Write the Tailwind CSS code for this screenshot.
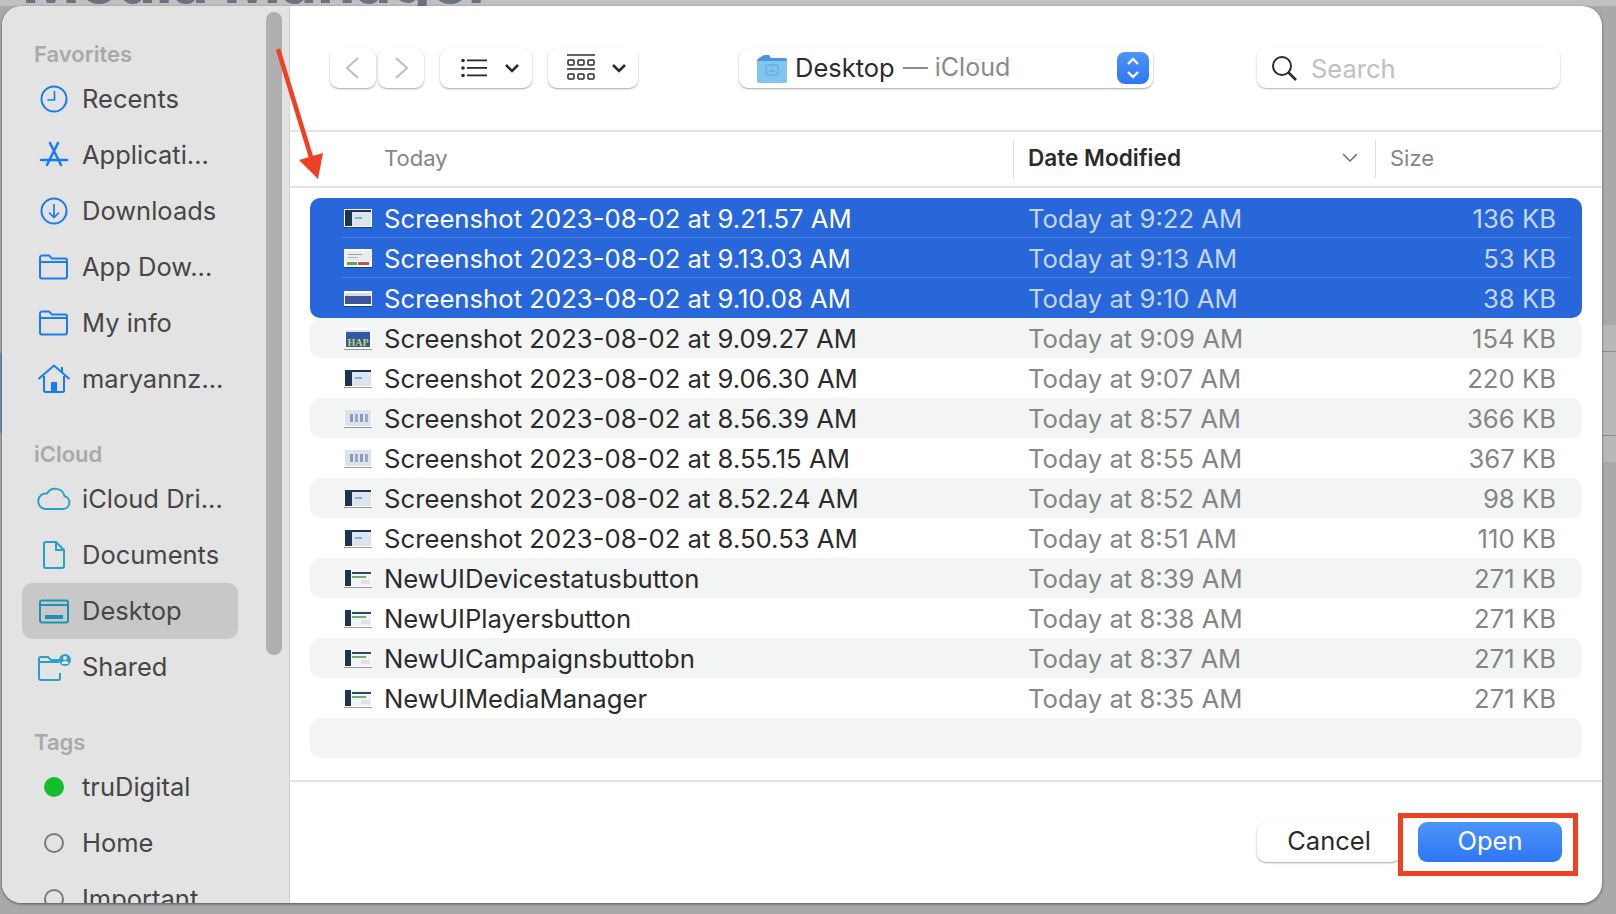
<!DOCTYPE html>
<html>

<head>
    <meta charset="UTF-8">
    <meta name="viewport" content="width=device-width, initial-scale=1.0">
    <script src="https://cdn.jsdelivr.net/npm/@tailwindcss/browser@4"></script>
    <title>Open dialog</title>
</head>

<body class="font-['Inter','Noto_Sans',sans-serif] overflow-hidden">
    <!-- file thumbnails -->
    <svg class="absolute w-0 h-0">
        <symbol id="thumb-dash" viewBox="0 0 30 24">
            <rect x="1" y="4" width="28" height="18" fill="#00000060"/><rect x="1" y="3" width="28" height="18" fill="#fff"/>
            <rect x="2" y="4" width="26" height="16" fill="#dfe4ec"/><rect x="2" y="4" width="26" height="2" fill="#1e3352"/><rect x="2" y="4" width="7" height="16" fill="#1e3352"/><rect x="12" y="11" width="7" height="2" fill="#6fb3e8"/>
        </symbol>
        <symbol id="thumb-form" viewBox="0 0 30 24">
            <rect x="1" y="4" width="28" height="18" fill="#00000060"/><rect x="1" y="3" width="28" height="18" fill="#fff"/>
            <rect x="2" y="5" width="26" height="10" fill="#e9ebee"/><rect x="5" y="8" width="14" height="1" fill="#9aa3b3"/><rect x="5" y="11" width="10" height="1" fill="#b0b6c2"/><rect x="4" y="16" width="10" height="3" fill="#57a55a"/><rect x="15" y="16" width="11" height="3" fill="#c9504a"/>
        </symbol>
        <symbol id="thumb-band" viewBox="0 0 30 24">
            <rect x="1" y="6" width="28" height="15" fill="#00000060"/><rect x="1" y="5" width="28" height="15" fill="#fff"/>
            <rect x="2" y="7" width="26" height="3" fill="#d9dce6"/><rect x="2" y="10" width="26" height="8" fill="#3f549f"/>
        </symbol>
        <symbol id="thumb-grid" viewBox="0 0 30 24">
            <rect x="1" y="4" width="28" height="18" fill="#00000060"/><rect x="1" y="3" width="28" height="18" fill="#fff"/>
            <rect x="2" y="4" width="26" height="16" fill="#dde2ec"/><rect x="7" y="8" width="3" height="8" fill="#8c9ac0"/><rect x="12" y="8" width="3" height="8" fill="#9aa7ca"/><rect x="17" y="8" width="3" height="8" fill="#8c9ac0"/><rect x="22" y="8" width="3" height="8" fill="#9aa7ca"/>
        </symbol>
        <symbol id="thumb-ui" viewBox="0 0 30 24">
            <rect x="1" y="4" width="28" height="18" fill="#00000060"/><rect x="1" y="3" width="28" height="18" fill="#fff"/>
            <rect x="2" y="4" width="26" height="16" fill="#f2f4f6"/><rect x="2" y="4" width="6" height="16" fill="#1e3352"/><rect x="9" y="6" width="19" height="2" fill="#2f4668"/><rect x="9" y="10" width="14" height="2" fill="#6bb06c"/><rect x="18" y="14" width="9" height="4" fill="#dfe2e6"/>
        </symbol>
    </svg>

    <div class="relative w-[1616px] h-[914px] overflow-hidden bg-[#a9a9a9] pl-[2px] pt-[6px]">
        <!-- what is behind the dialog -->
        <div class="absolute left-0 top-0 w-full h-[6px] bg-[#c0c0c0]"></div>
        <div class="absolute left-[22px] top-0 h-[7px] overflow-hidden blur-[0.5px]">
            <div class="-mt-[22px] text-[62px] leading-[6px] font-bold text-[#6b7280] whitespace-nowrap">Media Manager</div>
        </div>
        <div class="absolute left-0 top-[353px] w-[3px] h-[80px] bg-[#6f93b5]"></div>
        <div class="absolute left-[1602px] top-[325px] w-[14px] h-[137px] bg-[#b8b8b8] border-y-0">
            <div class="mt-[26px] h-[85px] border-y border-[#8d8d8d]"></div>
        </div>

        <!-- dialog -->
        <div class="relative flex w-[1600px] h-[897px] rounded-[20px] overflow-hidden bg-white shadow-[0_1px_3px_rgba(0,0,0,0.5)]">

            <!-- sidebar -->
            <aside class="relative w-[288px] shrink-0 h-full overflow-hidden bg-[#e3e3e3] border-r border-[#d0d0d0]">
                <div class="absolute left-[264px] top-[6px] w-[16px] h-[643px] rounded-full bg-[#afafaf]"></div>

                <div class="pl-[32px] pt-[38px] h-[20px] box-content text-[22px] leading-[20px] font-semibold text-[#a9a9a9]">Favorites</div>
                <div class="mt-[7px] ml-[20px] w-[216px] flex flex-col">
                    <div class="flex items-center h-[56px] pl-[14px] gap-[10px] text-[#464646] text-[25.5px]">
                        <svg class="w-[36px] h-[36px] shrink-0" viewBox="0 0 36 36" fill="none" stroke="#1a7cf5" stroke-width="2"><circle cx="18" cy="18" r="12.5"/><path d="M18.500 10v9h-7" stroke-width="1.7"/></svg>
                        Recents
                    </div>
                    <div class="flex items-center h-[56px] pl-[14px] gap-[10px] text-[#464646] text-[25.5px]">
                        <svg class="w-[36px] h-[36px] shrink-0" viewBox="0 0 36 36" fill="none" stroke="#1a7cf5" stroke-width="2.6" stroke-linecap="round"><path d="M14 6l11 22M22 6L11 28"/><path d="M5 23h26"/></svg>
                        Applicati...
                    </div>
                    <div class="flex items-center h-[56px] pl-[14px] gap-[10px] text-[#464646] text-[25.5px]">
                        <svg class="w-[36px] h-[36px] shrink-0" viewBox="0 0 36 36" fill="none" stroke="#1a7cf5" stroke-width="2"><circle cx="18" cy="18" r="12.5"/><path d="M18 11v13M13 19.500l5 5 5-5" stroke-width="1.7"/></svg>
                        Downloads
                    </div>
                    <div class="flex items-center h-[56px] pl-[14px] gap-[10px] text-[#464646] text-[25.5px]">
                        <svg class="w-[36px] h-[36px] shrink-0" viewBox="0 0 36 36" fill="none" stroke="#1a7cf5" stroke-width="2"><path d="M4 8.500a2 2 0 0 1 2-2h7l3 3h13a2 2 0 0 1 2 2v16a2 2 0 0 1-2 2H6a2 2 0 0 1-2-2zM4 13h27"/></svg>
                        App Dow...
                    </div>
                    <div class="flex items-center h-[56px] pl-[14px] gap-[10px] text-[#464646] text-[25.5px]">
                        <svg class="w-[36px] h-[36px] shrink-0" viewBox="0 0 36 36" fill="none" stroke="#1a7cf5" stroke-width="2"><path d="M4 8.500a2 2 0 0 1 2-2h7l3 3h13a2 2 0 0 1 2 2v16a2 2 0 0 1-2 2H6a2 2 0 0 1-2-2zM4 13h27"/></svg>
                        My info
                    </div>
                    <div class="flex items-center h-[56px] pl-[14px] gap-[10px] text-[#464646] text-[25.5px]">
                        <svg class="w-[36px] h-[36px] shrink-0" viewBox="0 0 36 36" fill="none" stroke="#1a7cf5" stroke-width="2"><path d="M2.500 18L18 4.500 33.500 18M8 15v14.500A1.500 1.500 0 0 0 9.500 31h17a1.500 1.500 0 0 0 1.500-1.500V15M26 6v5"/><rect x="15" y="21" width="6" height="10" fill="#1a7cf5" stroke="none"/></svg>
                        maryannz...
                    </div>
                </div>

                <div class="pl-[32px] mt-[37px] h-[20px] text-[22px] leading-[20px] font-semibold text-[#a9a9a9]">iCloud</div>
                <div class="mt-[7px] ml-[20px] w-[216px] flex flex-col">
                    <div class="flex items-center h-[56px] pl-[14px] gap-[10px] text-[#464646] text-[25.5px]">
                        <svg class="w-[36px] h-[36px] shrink-0" viewBox="0 0 36 36" fill="none" stroke="#27a2c4" stroke-width="2"><path d="M9 28h18a6.500 6.500 0 0 0 1.500-12.800A9.500 9.500 0 0 0 11 12.500 7.800 7.800 0 0 0 9 28z"/></svg>
                        iCloud Dri...
                    </div>
                    <div class="flex items-center h-[56px] pl-[14px] gap-[10px] text-[#464646] text-[25.5px]">
                        <svg class="w-[36px] h-[36px] shrink-0" viewBox="0 0 36 36" fill="none" stroke="#27a2c4" stroke-width="2"><path d="M8 7a2 2 0 0 1 2-2h10l8 8v16a2 2 0 0 1-2 2H10a2 2 0 0 1-2-2zM20 5v8h8"/></svg>
                        Documents
                    </div>
                    <div class="flex items-center h-[56px] pl-[14px] gap-[10px] text-[#464646] text-[25.5px] bg-[#c8c8c8] rounded-[10px]">
                        <svg class="w-[36px] h-[36px] shrink-0" viewBox="0 0 36 36" fill="none" stroke="#1d93b4" stroke-width="2"><rect x="4" y="7.500" width="28" height="22" rx="2"/><path d="M5 12h26"/><rect x="9" y="22" width="18" height="4" fill="#1d93b4" stroke="none"/></svg>
                        Desktop
                    </div>
                    <div class="flex items-center h-[56px] pl-[14px] gap-[10px] text-[#464646] text-[25.5px]">
                        <svg class="w-[36px] h-[36px] shrink-0" viewBox="0 0 36 36" fill="none" stroke="#27a2c4" stroke-width="2"><path d="M23 13H3v16a2 2 0 0 0 2 2h17a2 2 0 0 0 2-2v-5M3 13v-3a2 2 0 0 1 2-2h7l3 3h9"/><circle cx="29" cy="11" r="6" fill="#27a2c4" stroke="none"/><circle cx="29" cy="9" r="2" fill="#e3e3e3" stroke="none"/><path d="M25.500 15a3.500 3 0 0 1 7 0z" fill="#e3e3e3" stroke="none"/></svg>
                        Shared
                    </div>
                </div>

                <div class="pl-[32px] mt-[37px] h-[20px] text-[22px] leading-[20px] font-semibold text-[#a9a9a9]">Tags</div>
                <div class="mt-[7px] ml-[20px] w-[216px] flex flex-col">
                    <div class="flex items-center h-[56px] pl-[14px] gap-[10px] text-[#464646] text-[25.5px]">
                        <svg class="w-[36px] h-[36px] shrink-0" viewBox="0 0 36 36"><circle cx="18" cy="18" r="10" fill="#14bd2d"/></svg>
                        truDigital
                    </div>
                    <div class="flex items-center h-[56px] pl-[14px] gap-[10px] text-[#464646] text-[25.5px]">
                        <svg class="w-[36px] h-[36px] shrink-0" viewBox="0 0 36 36" fill="none" stroke="#7a7a7a" stroke-width="2"><circle cx="18" cy="18" r="9"/></svg>
                        Home
                    </div>
                    <div class="flex items-center h-[56px] pl-[14px] gap-[10px] text-[#464646] text-[25.5px]">
                        <svg class="w-[36px] h-[36px] shrink-0" viewBox="0 0 36 36" fill="none" stroke="#7a7a7a" stroke-width="2"><circle cx="18" cy="18" r="9"/></svg>
                        Important
                    </div>
                </div>
            </aside>

            <!-- main pane -->
            <main class="flex-1 min-w-0 flex flex-col">
                <!-- toolbar -->
                <div class="flex items-center h-[126px] shrink-0 pl-[40px] border-b-2 border-[#e4e4e4]">
                    <button class="flex items-center justify-center w-[46px] h-[40px] rounded-[9px] bg-white shadow-[0_1px_2px_rgba(0,0,0,0.35)]">
                        <svg class="w-[20px] h-[24px]" viewBox="0 0 20 24" fill="none" stroke="#bdbdbd" stroke-width="2"><path d="M15 2L4 12l11 10"/></svg>
                    </button>
                    <button class="ml-[2px] flex items-center justify-center w-[46px] h-[40px] rounded-[9px] bg-white shadow-[0_1px_2px_rgba(0,0,0,0.35)]">
                        <svg class="w-[20px] h-[24px]" viewBox="0 0 20 24" fill="none" stroke="#bdbdbd" stroke-width="2"><path d="M5 2l11 10L5 22"/></svg>
                    </button>
                    <button class="ml-[16px] flex items-center gap-[18px] pl-[21px] w-[92px] h-[40px] rounded-[9px] bg-white shadow-[0_1px_2px_rgba(0,0,0,0.35)]">
                        <svg class="w-[26px] h-[20px]" viewBox="0 0 26 20" fill="#2b2b2b"><circle cx="2" cy="2.500" r="1.800"/><circle cx="2" cy="10" r="1.800"/><circle cx="2" cy="17.500" r="1.800"/><rect x="6" y="1.500" width="20" height="1.800"/><rect x="6" y="9" width="20" height="1.800"/><rect x="6" y="16.500" width="20" height="1.800"/></svg>
                        <svg class="w-[14px] h-[10px]" viewBox="0 0 14 10" fill="none" stroke="#2b2b2b" stroke-width="2.600"><path d="M1 2l6 6 6-6"/></svg>
                    </button>
                    <button class="ml-[16px] flex items-center gap-[17px] pl-[19px] w-[90px] h-[40px] rounded-[9px] bg-white shadow-[0_1px_2px_rgba(0,0,0,0.35)]">
                        <svg class="w-[28px] h-[28px]" viewBox="0 0 28 28" fill="none" stroke="#2b2b2b" stroke-width="1.500"><path d="M0 1h28M0 15h28"/><rect x="1" y="6" width="6" height="5" rx="1"/><rect x="11" y="6" width="6" height="5" rx="1"/><rect x="21" y="6" width="6" height="5" rx="1"/><rect x="1" y="20" width="6" height="5" rx="1"/><rect x="11" y="20" width="6" height="5" rx="1"/><rect x="21" y="20" width="6" height="5" rx="1"/></svg>
                        <svg class="w-[14px] h-[10px]" viewBox="0 0 14 10" fill="none" stroke="#2b2b2b" stroke-width="2.600"><path d="M1 2l6 6 6-6"/></svg>
                    </button>
                    <div class="ml-[101px] relative flex items-center w-[414px] h-[40px] pl-[17px] rounded-[9px] bg-white shadow-[0_1px_2px_rgba(0,0,0,0.35)] text-[25.500px]">
                        <svg class="w-[32px] h-[30px] mr-[7px]" viewBox="0 0 32 30"><path d="M3 5l5-3h5l2 3h14a2 2 0 0 1 2 2v20a2 2 0 0 1-2 2H3a2 2 0 0 1-2-2V7z" fill="#4c94d8"/><path d="M1 8h30v20a2 2 0 0 1-2 2H3a2 2 0 0 1-2-2z" fill="#81c3f1"/><rect x="10" y="12" width="12" height="10" rx="1" fill="none" stroke="#5fa3d8"/><path d="M13 18h6" stroke="#5fa3d8"/></svg>
                        <span class="text-[#2b2b2b]">Desktop</span><span class="text-[#8a8a8a] ml-[8px] text-[25px]">— iCloud</span>
                        <div class="absolute right-[4px] top-[4px] w-[32px] h-[32px] rounded-[8px] bg-[linear-gradient(180deg,#4b94f8,#2f76f6)] flex items-center justify-center">
                            <svg class="w-[16px] h-[26px]" viewBox="0 0 16 26" fill="none" stroke="white" stroke-width="2.400"><path d="M3 9l5-5 5 5M3 17l5 5 5-5"/></svg>
                        </div>
                    </div>
                    <div class="ml-[104px] flex items-center w-[303px] h-[40px] pl-[13px] rounded-[9px] bg-white shadow-[0_1px_2px_rgba(0,0,0,0.3)] text-[25.500px] text-[#c0c0c0]">
                        <svg class="w-[28px] h-[28px] mr-[13px]" viewBox="0 0 28 28" fill="none" stroke="#2b2b2b" stroke-width="2"><circle cx="12" cy="12" r="9"/><path d="M18.500 18.500L26 26" stroke-width="2.500"/></svg>
                        <span class="pt-[2px]">Search</span>
                    </div>
                </div>

                <!-- column headers -->
                <div class="flex items-center h-[56px] shrink-0 border-b-2 border-[#e4e4e4] text-[22px]">
                    <div class="w-[723px] pl-[94px] pb-[2px] text-[#858585]">Today</div>
                    <div class="relative flex items-center w-[362px] h-[38px] pl-[14px] pb-[2px] border-l border-[#dddddd] font-semibold text-[22.6px] text-[#2b2b2b]">
                        Date Modified
                        <svg class="absolute right-[17px] top-[13px] w-[16px] h-[10px]" viewBox="0 0 16 10" fill="none" stroke="#6e6e6e" stroke-width="1.500"><path d="M1 1l7 7 7-7"/></svg>
                    </div>
                    <div class="flex items-center h-[38px] pl-[14px] pb-[2px] border-l border-[#dddddd] text-[#858585]">Size</div>
                </div>

                <!-- file rows -->
                <div class="pt-[10px] pl-[20px] pr-[20px] flex flex-col text-[25.7px] text-[#2b2b2b]">
                    <div class="h-[40px] rounded-t-[10px] bg-[#2767d9] text-white">
                        <div class="flex items-center h-full ml-[32px] mr-[12px] pr-[14px] border-b border-[#4a80e0]">
                            <svg class="w-[30px] h-[24px] ml-[1px] mr-[11px] shrink-0"><use href="#thumb-dash"/></svg>
                            <div class="w-[644px] pt-[3px] whitespace-nowrap">Screenshot 2023-08-02 at 9.21.57 AM</div>
                            <div class="w-[343px] pt-[3px] whitespace-nowrap text-[#c5d6f5]">Today at 9:22 AM</div>
                            <div class="flex-1 pt-[3px] text-right text-[#c5d6f5] whitespace-nowrap">136 KB</div>
                        </div>
                    </div>
                    <div class="h-[40px] bg-[#2767d9] text-white">
                        <div class="flex items-center h-full ml-[32px] mr-[12px] pr-[14px] border-b border-[#4a80e0]">
                            <svg class="w-[30px] h-[24px] ml-[1px] mr-[11px] shrink-0"><use href="#thumb-form"/></svg>
                            <div class="w-[644px] pt-[3px] whitespace-nowrap">Screenshot 2023-08-02 at 9.13.03 AM</div>
                            <div class="w-[343px] pt-[3px] whitespace-nowrap text-[#c5d6f5]">Today at 9:13 AM</div>
                            <div class="flex-1 pt-[3px] text-right text-[#c5d6f5] whitespace-nowrap">53 KB</div>
                        </div>
                    </div>
                    <div class="h-[40px] rounded-b-[10px] bg-[#2767d9] text-white">
                        <div class="flex items-center h-full ml-[32px] mr-[12px] pr-[14px]">
                            <svg class="w-[30px] h-[24px] ml-[1px] mr-[11px] shrink-0"><use href="#thumb-band"/></svg>
                            <div class="w-[644px] pt-[2px] whitespace-nowrap">Screenshot 2023-08-02 at 9.10.08 AM</div>
                            <div class="w-[343px] pt-[2px] whitespace-nowrap text-[#c5d6f5]">Today at 9:10 AM</div>
                            <div class="flex-1 pt-[2px] text-right text-[#c5d6f5] whitespace-nowrap">38 KB</div>
                        </div>
                    </div>
                    <div class="flex items-center h-[40px] pl-[33px] pr-[26px] rounded-[10px] bg-[#f3f5f5]">
                        <svg class="w-[30px] h-[24px] mr-[11px] shrink-0" viewBox="0 0 30 24">
                            <rect x="1" y="3" width="28" height="21" fill="#00000060"/><rect x="1" y="2" width="28" height="21" fill="#fff"/>
                            <rect x="3" y="4" width="24" height="17" fill="#3457a8"/><rect x="3" y="4" width="24" height="2" fill="#dfe4ec"/>
                            <text x="15" y="20" text-anchor="middle" font-family="Liberation Serif, serif" font-size="10" font-weight="700" fill="#c9d94a">HAP</text>
                        </svg>
                        <div class="w-[644px] pt-[2px] whitespace-nowrap">Screenshot 2023-08-02 at 9.09.27 AM</div>
                        <div class="w-[343px] pt-[2px] whitespace-nowrap text-[#858585]">Today at 9:09 AM</div>
                        <div class="flex-1 pt-[2px] text-right text-[#858585] whitespace-nowrap">154 KB</div>
                    </div>
                    <div class="flex items-center h-[40px] pl-[33px] pr-[26px]">
                        <svg class="w-[30px] h-[24px] mr-[11px] shrink-0"><use href="#thumb-dash"/></svg>
                        <div class="w-[644px] pt-[2px] whitespace-nowrap">Screenshot 2023-08-02 at 9.06.30 AM</div>
                        <div class="w-[343px] pt-[2px] whitespace-nowrap text-[#858585]">Today at 9:07 AM</div>
                        <div class="flex-1 pt-[2px] text-right text-[#858585] whitespace-nowrap">220 KB</div>
                    </div>
                    <div class="flex items-center h-[40px] pl-[33px] pr-[26px] rounded-[10px] bg-[#f3f5f5]">
                        <svg class="w-[30px] h-[24px] mr-[11px] shrink-0"><use href="#thumb-grid"/></svg>
                        <div class="w-[644px] pt-[2px] whitespace-nowrap">Screenshot 2023-08-02 at 8.56.39 AM</div>
                        <div class="w-[343px] pt-[2px] whitespace-nowrap text-[#858585]">Today at 8:57 AM</div>
                        <div class="flex-1 pt-[2px] text-right text-[#858585] whitespace-nowrap">366 KB</div>
                    </div>
                    <div class="flex items-center h-[40px] pl-[33px] pr-[26px]">
                        <svg class="w-[30px] h-[24px] mr-[11px] shrink-0"><use href="#thumb-grid"/></svg>
                        <div class="w-[644px] pt-[2px] whitespace-nowrap">Screenshot 2023-08-02 at 8.55.15 AM</div>
                        <div class="w-[343px] pt-[2px] whitespace-nowrap text-[#858585]">Today at 8:55 AM</div>
                        <div class="flex-1 pt-[2px] text-right text-[#858585] whitespace-nowrap">367 KB</div>
                    </div>
                    <div class="flex items-center h-[40px] pl-[33px] pr-[26px] rounded-[10px] bg-[#f3f5f5]">
                        <svg class="w-[30px] h-[24px] mr-[11px] shrink-0"><use href="#thumb-dash"/></svg>
                        <div class="w-[644px] pt-[2px] whitespace-nowrap">Screenshot 2023-08-02 at 8.52.24 AM</div>
                        <div class="w-[343px] pt-[2px] whitespace-nowrap text-[#858585]">Today at 8:52 AM</div>
                        <div class="flex-1 pt-[2px] text-right text-[#858585] whitespace-nowrap">98 KB</div>
                    </div>
                    <div class="flex items-center h-[40px] pl-[33px] pr-[26px]">
                        <svg class="w-[30px] h-[24px] mr-[11px] shrink-0"><use href="#thumb-dash"/></svg>
                        <div class="w-[644px] pt-[2px] whitespace-nowrap">Screenshot 2023-08-02 at 8.50.53 AM</div>
                        <div class="w-[343px] pt-[2px] whitespace-nowrap text-[#858585]">Today at 8:51 AM</div>
                        <div class="flex-1 pt-[2px] text-right text-[#858585] whitespace-nowrap">110 KB</div>
                    </div>
                    <div class="flex items-center h-[40px] pl-[33px] pr-[26px] rounded-[10px] bg-[#f3f5f5]">
                        <svg class="w-[30px] h-[24px] mr-[11px] shrink-0"><use href="#thumb-ui"/></svg>
                        <div class="w-[644px] pt-[2px] whitespace-nowrap">NewUIDevicestatusbutton</div>
                        <div class="w-[343px] pt-[2px] whitespace-nowrap text-[#858585]">Today at 8:39 AM</div>
                        <div class="flex-1 pt-[2px] text-right text-[#858585] whitespace-nowrap">271 KB</div>
                    </div>
                    <div class="flex items-center h-[40px] pl-[33px] pr-[26px]">
                        <svg class="w-[30px] h-[24px] mr-[11px] shrink-0"><use href="#thumb-ui"/></svg>
                        <div class="w-[644px] pt-[2px] whitespace-nowrap">NewUIPlayersbutton</div>
                        <div class="w-[343px] pt-[2px] whitespace-nowrap text-[#858585]">Today at 8:38 AM</div>
                        <div class="flex-1 pt-[2px] text-right text-[#858585] whitespace-nowrap">271 KB</div>
                    </div>
                    <div class="flex items-center h-[40px] pl-[33px] pr-[26px] rounded-[10px] bg-[#f3f5f5]">
                        <svg class="w-[30px] h-[24px] mr-[11px] shrink-0"><use href="#thumb-ui"/></svg>
                        <div class="w-[644px] pt-[2px] whitespace-nowrap">NewUICampaignsbuttobn</div>
                        <div class="w-[343px] pt-[2px] whitespace-nowrap text-[#858585]">Today at 8:37 AM</div>
                        <div class="flex-1 pt-[2px] text-right text-[#858585] whitespace-nowrap">271 KB</div>
                    </div>
                    <div class="flex items-center h-[40px] pl-[33px] pr-[26px]">
                        <svg class="w-[30px] h-[24px] mr-[11px] shrink-0"><use href="#thumb-ui"/></svg>
                        <div class="w-[644px] pt-[2px] whitespace-nowrap">NewUIMediaManager</div>
                        <div class="w-[343px] pt-[2px] whitespace-nowrap text-[#858585]">Today at 8:35 AM</div>
                        <div class="flex-1 pt-[2px] text-right text-[#858585] whitespace-nowrap">271 KB</div>
                    </div>
                    <div class="h-[40px] rounded-[10px] bg-[#f3f5f5]"></div>
                </div>

                <!-- footer -->
                <div class="mt-[22px] flex-1 border-t-2 border-[#e4e4e4] relative">
                    <button class="absolute left-[967px] top-[40px] w-[144px] h-[40px] pb-[2px] rounded-[9px] bg-white shadow-[0_1px_2px_rgba(0,0,0,0.35)] text-[25.500px] text-[#2b2b2b]">Cancel</button>
                    <button class="absolute left-[1128px] top-[40px] w-[144px] h-[40px] pb-[2px] rounded-[9px] bg-[linear-gradient(180deg,#4b94f8,#2f76f6)] text-[25.500px] text-white">Open</button>
                    <div class="absolute left-[1108px] top-[31px] w-[180px] h-[63px] border-[5px] border-[#ee4023]"></div>
                </div>
            </main>
        </div>

        <!-- red annotation arrow -->
        <svg class="absolute left-[265px] top-[40px] w-[70px] h-[150px]" viewBox="0 0 70 150" fill="none">
            <path d="M13 9l33 108" stroke="#ee4023" stroke-width="4.500"/>
            <path d="M53 139L34 120 58 113z" fill="#ee4023"/>
        </svg>
    </div>
</body>

</html>
